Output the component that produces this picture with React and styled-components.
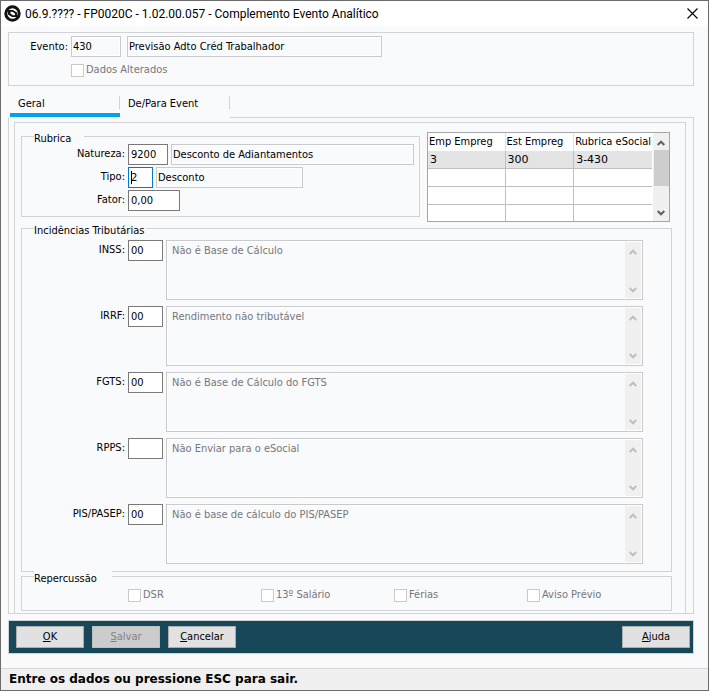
import React from 'react';
import styled, { createGlobalStyle } from 'styled-components';

const GlobalStyle = createGlobalStyle`
    * {
        box-sizing: border-box;
    }

    body {
        margin: 0;
        background: #f9fafc;
        color: #000;
        font: 11px/16px "DejaVu Sans Condensed", "DejaVu Sans", sans-serif;
    }

    button, input, textarea {
        font: inherit;
        color: inherit;
        margin: 0;
    }
`;

const Window = styled.div`
    min-height: 100vh;
    display: flex;
    flex-direction: column;
    border: 1px solid #6b6b6b;
    background: #f9fafc;
`;

const TitleBar = styled.header`
    height: 25px;
    display: flex;
    align-items: center;
    gap: 4px;
    padding: 0 8px 0 3px;
    background: #fff;
`;

const Title = styled.h1`
    flex: 1;
    margin: 0;
    font: 12px/16px Roboto, "Open Sans", sans-serif;
`;

const CloseButton = styled.button`
    display: flex;
    padding: 2px;
    border: 0;
    background: none;
`;

const Body = styled.main`
    flex: 1;
    padding: 6px 14px 14px 7px;
`;

const EventBox = styled.section`
    height: 54px;
    padding: 3px 0 0 15px;
    border: 1px solid #d2d3d5;
`;

const EventRow = styled.div`
    display: flex;
    align-items: center;
    gap: 6px;
`;

const EventLabel = styled.label`
    width: 44px;
    margin-right: -3px;
    text-align: right;
`;

const EventCheck = styled.div`
    padding: 5px 0 0 47px;
`;

const TextInput = styled.input`
    flex: none;
    width: ${props => props.$width}px;
    height: 21px;
    padding: 0 2px;
    border: 1px solid ${props => (props.$active ? '#0078d7' : '#7a7a7a')};
    outline: 0;
    background: #fff;

    &:read-only {
        padding: 0 1px;
        border-color: #cacacc;
        background: #f9fafc;
        box-shadow: inset 0 0 0 1px #fff;
    }
`;

const CheckLabel = styled.label`
    display: flex;
    align-items: center;
    gap: 2px;
    color: #76777b;
`;

const CheckBox = styled.input`
    appearance: none;
    width: 13px;
    height: 13px;
    border: 1px solid #cacacc;
    background: #fff;
`;

const Tabs = styled.nav`
    display: flex;
    height: 22px;
    margin-top: 10px;
    padding-left: 2px;
`;

const Tab = styled.button`
    width: 110px;
    height: 21px;
    padding: 0 8px 1px;
    border: 0;
    border-bottom: 4px solid ${props => (props.$selected ? '#00a2e8' : 'transparent')};
    background: linear-gradient(#d2d3d5, #d2d3d5) right top / 1px 13px no-repeat;
    text-align: left;
`;

const TabsLine = styled.div`
    flex: 1;
    border-bottom: 1px solid #d2d3d5;
`;

const TabPanel = styled.section`
    padding: 4px 7px 0 5px;
    border: 1px solid #d2d3d5;
    border-top: 0;
`;

const PanelInner = styled.div`
    padding: 9px 13px 2px 6px;
    border: 1px solid #d2d3d5;
    border-bottom: 0;
`;

const TopRow = styled.div`
    display: flex;
    gap: 7px;
    padding-right: 2px;
`;

const Group = styled.fieldset`
    position: relative;
    min-width: 0;
    margin: 0;
    padding: 0;
    border: 1px solid #d2d3d5;
`;

const Legend = styled.legend`
    position: absolute;
    top: -6px;
    left: 12px;
    width: ${props => props.$width}px;
    padding: 0;
    background: #f9fafc;
    white-space: nowrap;
`;

const RubricGroup = styled(Group)`
    flex: 1;
    height: 81px;
    margin-top: 4px;
    padding: 7px 5px 0 0;
    display: flex;
    flex-direction: column;
    gap: 2px;
`;

const TaxGroup = styled(Group)`
    margin-top: 6px;
    padding: 11px 28px 7px 0;
    display: flex;
    flex-direction: column;
    gap: 6px;
`;

const EffectGroup = styled(Group)`
    height: 35px;
    margin-top: 4px;
    padding: 10px 0 0 106px;
    display: grid;
    grid-template-columns: repeat(3, 133px) 1fr;
    align-items: start;
`;

const Field = styled.div`
    display: flex;
    align-items: flex-start;
    gap: 3px;
`;

const FieldLabel = styled.label`
    flex: none;
    width: 103px;
    line-height: 20px;
    text-align: right;
`;

const Description = styled(TextInput)`
    flex: ${props => (props.$width ? 'none' : 1)};
    width: ${props => (props.$width ? `${props.$width}px` : 'auto')};
    min-width: 0;
`;

const CaretBox = styled.div`
    position: relative;
    display: flex;
`;

const Caret = styled.span`
    position: absolute;
    top: 4px;
    left: 3px;
    width: 1px;
    height: 13px;
    background: #000;
`;

const Memo = styled.div`
    flex: 1;
    height: 60px;
    display: flex;
    padding: 1px;
    border: 1px solid #cacacc;
    box-shadow: inset 0 0 0 1px #fff;
`;

const MemoText = styled.textarea`
    flex: 1;
    min-width: 0;
    padding: 1px 4px;
    border: 0;
    outline: 0;
    resize: none;
    overflow: hidden;
    background: transparent;
    color: #76777b;
`;

const ScrollTrack = styled.div`
    width: 16px;
    display: flex;
    flex-direction: column;
    align-items: center;
    padding: 7px 0 5px;
    background: #f0f0f0;
    color: ${props => (props.$enabled ? '#606060' : '#bfbfbf')};
`;

const ScrollThumb = styled.div`
    flex: ${props => (props.$visible ? 'none' : 1)};
    width: 15px;
    height: 36px;
    margin: 4px 0 auto;
    background: ${props => (props.$visible ? '#cdcdcd' : 'none')};
`;

const GridBox = styled.div`
    width: 243px;
    height: 90px;
    display: flex;
    overflow: hidden;
    border: 1px solid #a5a6ab;
    background: #fff;
`;

const Grid = styled.table`
    flex: 1;
    table-layout: fixed;
    border-collapse: separate;
    border-spacing: 0;
    margin-right: 1px;
`;

const HeadCell = styled.th`
    width: ${props => props.$width}px;
    height: 18px;
    padding: 0 1px;
    border-right: 1px solid #e0e0e0;
    font-weight: normal;
    text-align: left;
    white-space: nowrap;

    &:last-child {
        border-right: 0;
    }
`;

const Cell = styled.td`
    height: 18px;
    padding: 0 2px;
    border-right: 1px solid #bfbfbf;
    border-bottom: 1px solid #bfbfbf;
    background: ${props => (props.$selected ? '#e4e4e4' : '#fff')};
    font-family: "DejaVu Sans", sans-serif;

    &:last-child {
        border-right: 0;
    }

    tr:last-child > & {
        border-bottom: 0;
    }
`;

const Footer = styled.footer`
    height: 34px;
    display: flex;
    align-items: center;
    gap: 8px;
    margin-top: 6px;
    padding: 0 3px 0 7px;
    border: 1px solid #d2d3d5;
    background: #174759;
`;

const Button = styled.button`
    width: 68px;
    height: 22px;
    padding: 0;
    border: 1px solid #adadad;
    background: #e1e1e1;

    &:disabled {
        border-color: #bfbfbf;
        background: #ccc;
        color: #838383;
    }

    &:last-child {
        margin-left: auto;
    }
`;

const StatusBar = styled.div`
    height: 22px;
    padding: 2px 8px;
    border-top: 1px solid #d7d7d7;
    background: #f0f0f0;
    font: bold 12px/16px "DejaVu Sans", sans-serif;
`;

const taxes = [
    { id: 'inss', label: 'INSS:', code: '00', text: 'Não é Base de Cálculo' },
    { id: 'irrf', label: 'IRRF:', code: '00', text: 'Rendimento não tributável' },
    { id: 'fgts', label: 'FGTS:', code: '00', text: 'Não é Base de Cálculo do FGTS' },
    { id: 'rpps', label: 'RPPS:', code: '', text: 'Não Enviar para o eSocial' },
    { id: 'pis', label: 'PIS/PASEP:', code: '00', text: 'Não é base de cálculo do PIS/PASEP' }
];

const rows = [['3', '300', '3-430'], ['', '', ''], ['', '', ''], ['', '', '']];

const Logo = () => (
    <svg width="17" height="17" viewBox="0 0 17 17">
        <circle cx="8.5" cy="8.5" r="6.7" fill="#fff" stroke="#111" strokeWidth="3" />
        <path d="M3 5 H9 L13 7.5 V9 L14 12 H8 L4 9.5 V8 Z" fill="#111" />
        <path d="M6.5 6.8 H8.5 L11 8.6 V10.2 H8.7 L6.5 8.5 Z" fill="#fff" />
    </svg>
);

const Arrow = ({ down }) => (
    <svg width="8" height="6" viewBox="0 0 8 6" fill="none" stroke="currentColor" strokeWidth="2">
        <path d={down ? 'M0.7 1 L4 4.3 L7.3 1' : 'M0.7 5 L4 1.7 L7.3 5'} />
    </svg>
);

const ScrollBar = ({ enabled }) => (
    <ScrollTrack $enabled={enabled}>
        <Arrow />
        <ScrollThumb $visible={enabled} />
        <Arrow down />
    </ScrollTrack>
);

const Check = ({ label }) => (
    <CheckLabel>
        <CheckBox type="checkbox" disabled />
        {label}
    </CheckLabel>
);

export default class App extends React.Component {
    renderTaxes() {
        return taxes.map(tax => (
            <Field key={tax.id}>
                <FieldLabel htmlFor={tax.id}>{tax.label}</FieldLabel>
                <TextInput id={tax.id} $width={35} defaultValue={tax.code} />
                <Memo>
                    <MemoText aria-label={tax.label} readOnly defaultValue={tax.text} />
                    <ScrollBar />
                </Memo>
            </Field>
        ));
    }

    renderGrid() {
        return (
            <GridBox>
                <Grid>
                    <thead>
                        <tr>
                            <HeadCell $width={78}>Emp Empreg</HeadCell>
                            <HeadCell $width={69}>Est Empreg</HeadCell>
                            <HeadCell $width={77}>Rubrica eSocial</HeadCell>
                        </tr>
                    </thead>
                    <tbody>
                        {rows.map((row, i) => (
                            <tr key={i}>
                                {row.map((value, j) => (
                                    <Cell key={j} $selected={i === 0}>{value}</Cell>
                                ))}
                            </tr>
                        ))}
                    </tbody>
                </Grid>
                <ScrollBar enabled />
            </GridBox>
        );
    }

    render() {
        return (
            <React.Fragment>
                <GlobalStyle />
                <Window>
                    <TitleBar>
                        <Logo />
                        <Title>06.9.???? - FP0020C - 1.02.00.057 - Complemento Evento Analítico</Title>
                        <CloseButton aria-label="Fechar">
                            <svg width="11" height="11" viewBox="0 0 11 11" stroke="#000" strokeWidth="1.1">
                                <path d="M0.5 0.5 L10.5 10.5 M10.5 0.5 L0.5 10.5" />
                            </svg>
                        </CloseButton>
                    </TitleBar>
                    <Body>
                        <EventBox>
                            <EventRow>
                                <EventLabel htmlFor="evento">Evento:</EventLabel>
                                <TextInput id="evento" $width={50} readOnly defaultValue="430" />
                                <TextInput
                                    aria-label="Descrição do evento"
                                    $width={255}
                                    readOnly
                                    defaultValue="Previsão Adto Créd Trabalhador"
                                />
                            </EventRow>
                            <EventCheck>
                                <Check label="Dados Alterados" />
                            </EventCheck>
                        </EventBox>
                        <Tabs>
                            <Tab $selected>Geral</Tab>
                            <Tab>De/Para Event</Tab>
                            <TabsLine />
                        </Tabs>
                        <TabPanel>
                            <PanelInner>
                                <TopRow>
                                    <RubricGroup>
                                        <Legend $width={50}>Rubrica</Legend>
                                        <Field>
                                            <FieldLabel htmlFor="natureza">Natureza:</FieldLabel>
                                            <TextInput id="natureza" $width={40} defaultValue="9200" />
                                            <Description
                                                aria-label="Descrição da natureza"
                                                readOnly
                                                defaultValue="Desconto de Adiantamentos"
                                            />
                                        </Field>
                                        <Field>
                                            <FieldLabel htmlFor="tipo">Tipo:</FieldLabel>
                                            <CaretBox>
                                                <TextInput id="tipo" $width={25} $active defaultValue="2" />
                                                <Caret />
                                            </CaretBox>
                                            <Description
                                                aria-label="Descrição do tipo"
                                                $width={147}
                                                readOnly
                                                defaultValue="Desconto"
                                            />
                                        </Field>
                                        <Field>
                                            <FieldLabel htmlFor="fator">Fator:</FieldLabel>
                                            <TextInput id="fator" $width={52} defaultValue="0,00" />
                                        </Field>
                                    </RubricGroup>
                                    {this.renderGrid()}
                                </TopRow>
                                <TaxGroup>
                                    <Legend $width={112}>Incidências Tributárias</Legend>
                                    {this.renderTaxes()}
                                </TaxGroup>
                                <EffectGroup>
                                    <Legend $width={78}>Repercussão</Legend>
                                    <Check label="DSR" />
                                    <Check label="13º Salário" />
                                    <Check label="Férias" />
                                    <Check label="Aviso Prévio" />
                                </EffectGroup>
                            </PanelInner>
                        </TabPanel>
                        <Footer>
                            <Button><u>O</u>K</Button>
                            <Button disabled><u>S</u>alvar</Button>
                            <Button><u>C</u>ancelar</Button>
                            <Button><u>A</u>juda</Button>
                        </Footer>
                    </Body>
                    <StatusBar>Entre os dados ou pressione ESC para sair.</StatusBar>
                </Window>
            </React.Fragment>
        );
    }
}
